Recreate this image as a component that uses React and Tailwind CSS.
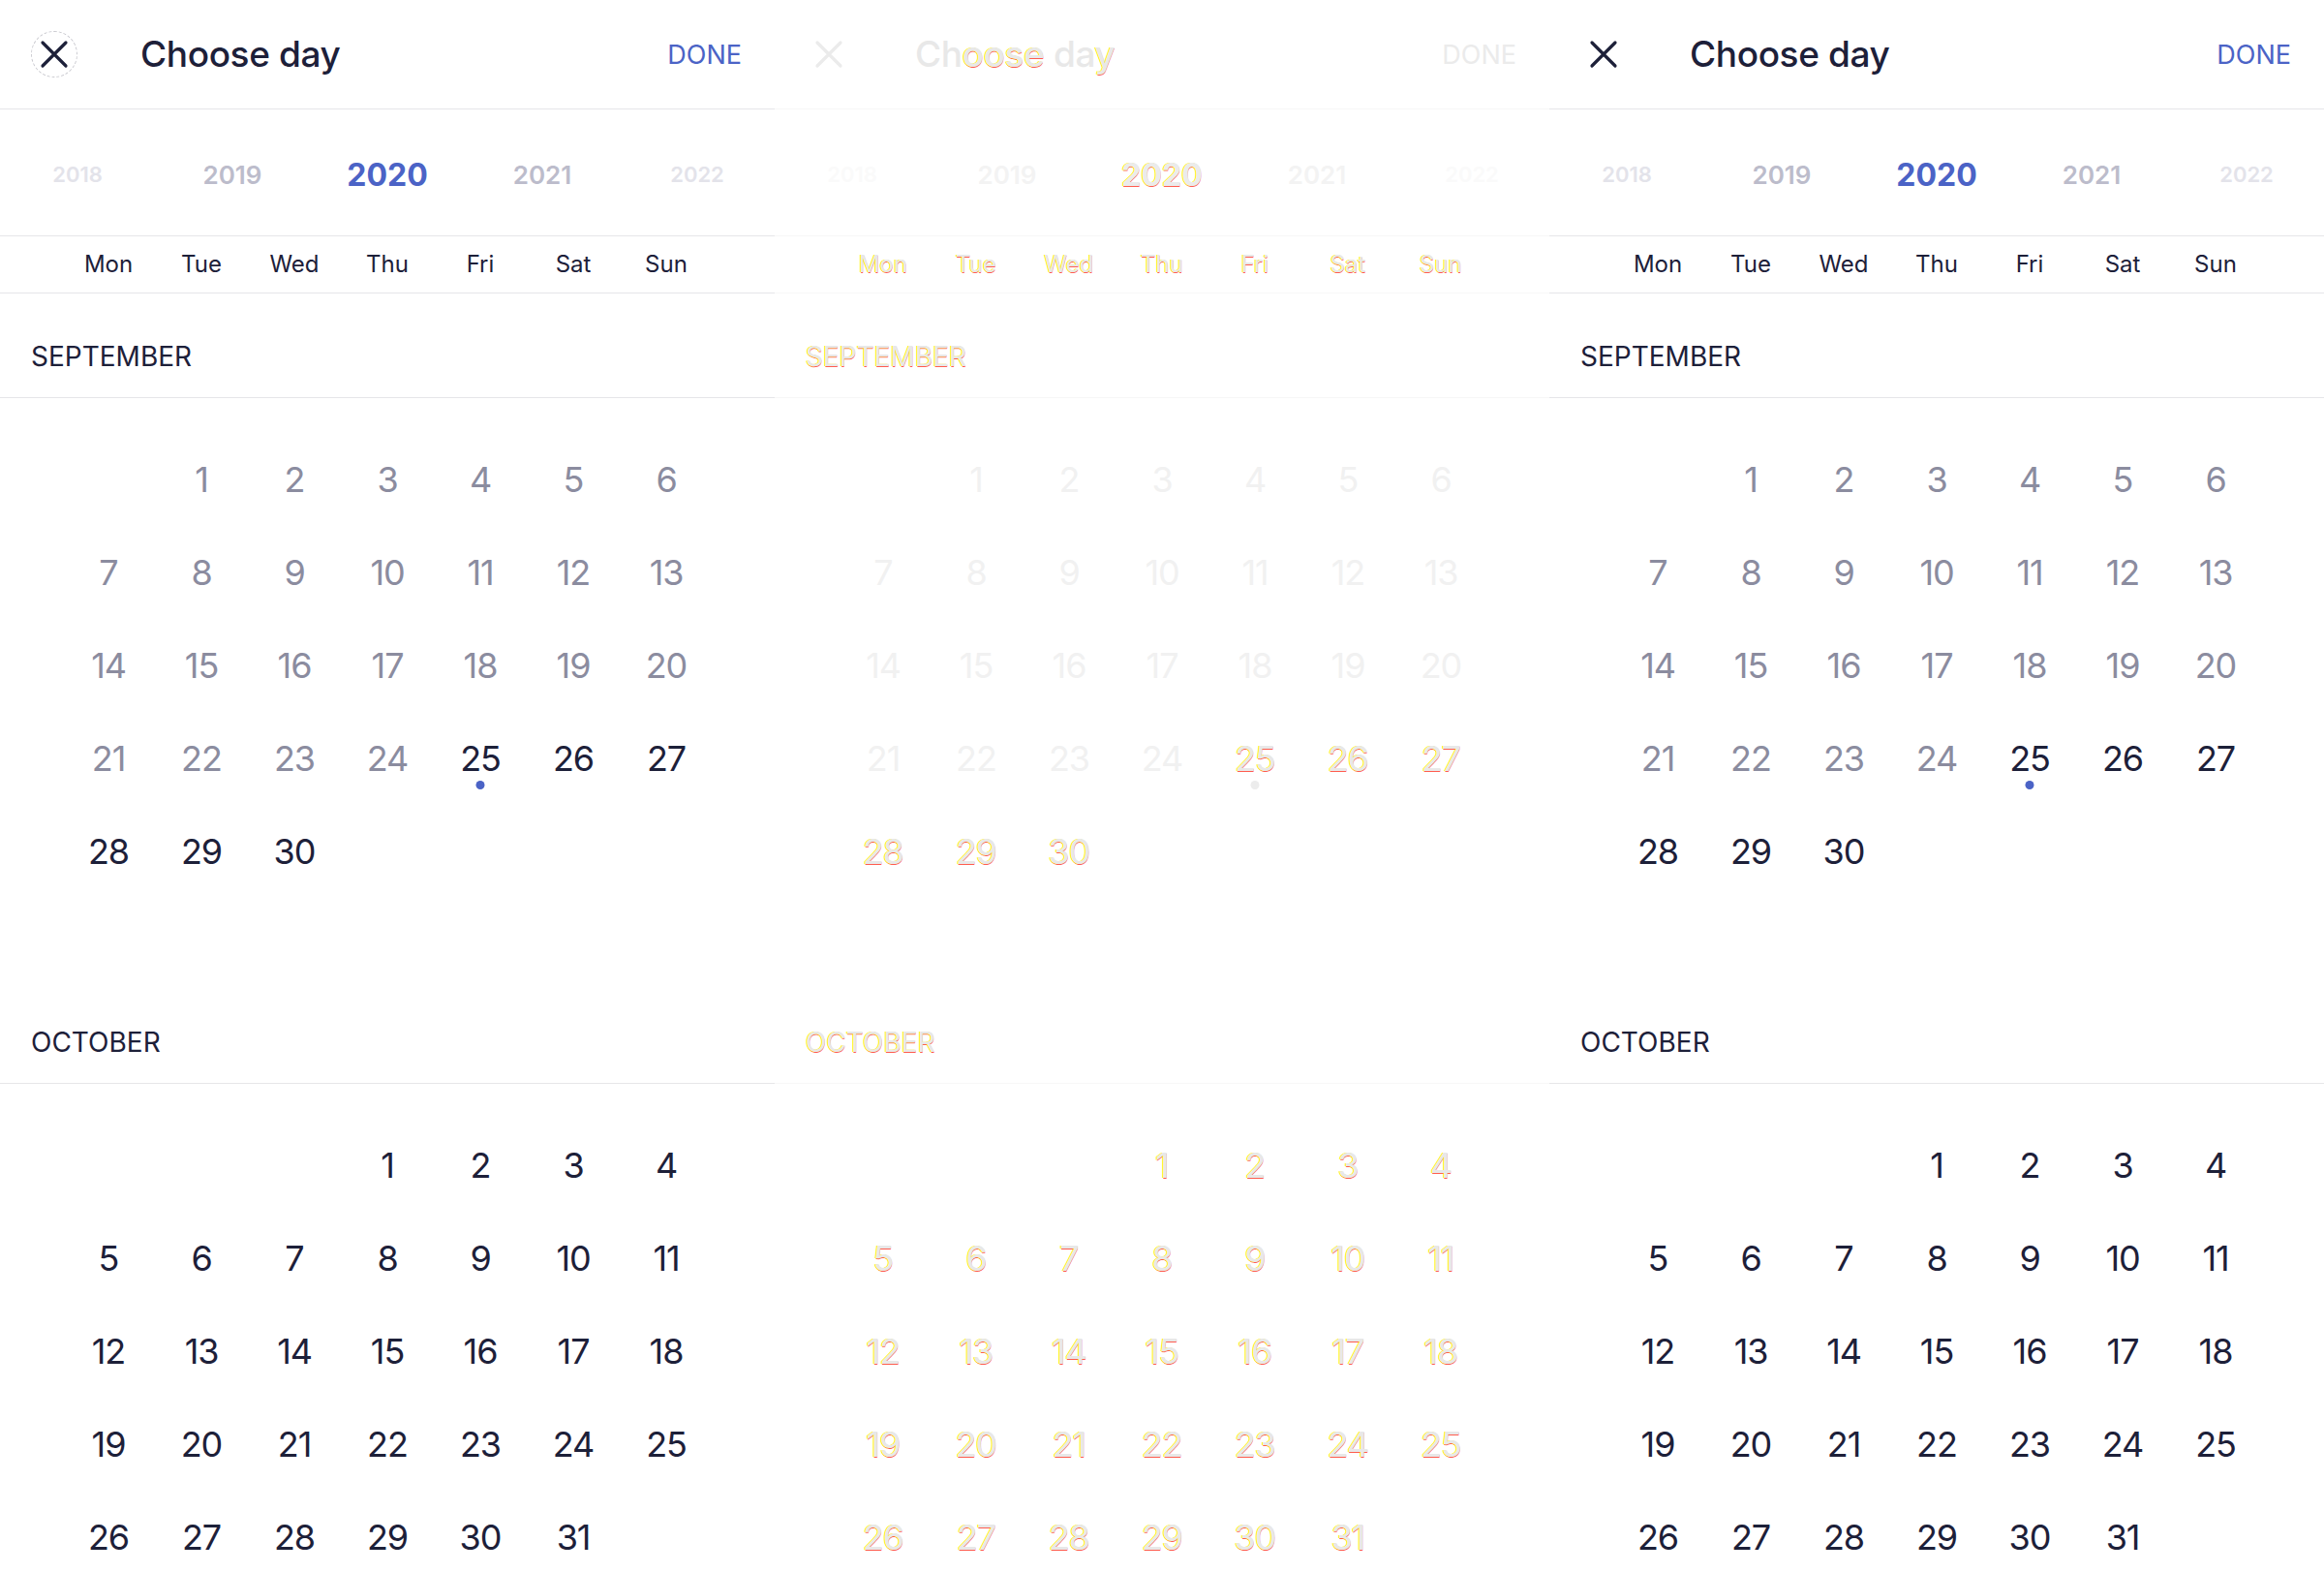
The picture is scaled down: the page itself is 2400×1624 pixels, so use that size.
import React from 'react'

const YEARS = [
  { y: '2018', k: 'far' },
  { y: '2019', k: 'mid' },
  { y: '2020', k: 'cur' },
  { y: '2021', k: 'mid' },
  { y: '2022', k: 'far' },
]
const WEEK = ['Mon', 'Tue', 'Wed', 'Thu', 'Fri', 'Sat', 'Sun']

const themes = {
  normal: {
    dark: 'text-[#1d2039]',
    gray: 'text-[#8b8c9f]',
    blue: 'text-[#4b63c6]',
    mid: 'text-[#bcbccb]',
    far: 'text-[#e3e3ea]',
    line: 'border-[#e6e6e9]',
    dot: 'bg-[#4b63c6]',
    hl: '',
  },
  diff: {
    dark: 'text-[#e8e8e8]',
    gray: 'text-[#f1f1f1]',
    blue: 'text-[#ebebeb]',
    mid: 'text-[#f3f3f3]',
    far: 'text-[#fafafa]',
    line: 'border-[#f7f7f7]',
    dot: 'bg-[#ececec]',
    hl: '[text-shadow:-1px_0_0_#fff200,0_1px_0_rgba(255,20,0,0.7)]',
  },
}

function monthCells(offset, days) {
  const cells = []
  for (let i = 0; i < offset; i++) cells.push(null)
  for (let d = 1; d <= days; d++) cells.push(d)
  return cells
}

function CloseIcon({ ring, color }) {
  return (
    <div className={`w-[48px] h-[48px] rounded-full flex items-center justify-center ${ring ? 'border border-dashed border-[#c9c9cf]' : 'border border-transparent'}`}>
      <svg width="30" height="30" viewBox="0 0 30 30" fill="none">
        <path d="M3 3 L27 27 M27 3 L3 27" stroke={color} strokeWidth="3.2" strokeLinecap="round" />
      </svg>
    </div>
  )
}

function Month({ name, offset, days, t, diff, isSept }) {
  const cells = monthCells(offset, days)
  return (
    <div>
      <div className={`pl-8 pt-[50px] pb-[27px] border-b ${t.line}`}>
        <div className={`text-[28px] leading-[30px] ${t.dark} ${diff ? t.hl : ''}`}>{name}</div>
      </div>
      <div className="px-16 pt-[36px] pb-[84px] grid grid-cols-7">
        {cells.map((d, i) => {
          const past = isSept && d !== null && d < 25
          const changed = diff && !past
          return (
            <div key={i} className="h-[96px] flex flex-col items-center justify-center relative">
              {d !== null && (
                <span className={`text-[36px] leading-[40px] tracking-[-0.03em] ${past ? t.gray : t.dark} ${changed ? t.hl : ''}`}>{d}</span>
              )}
              {isSept && d === 25 && (
                <span className={`absolute left-1/2 -translate-x-1/2 top-[71px] w-[9px] h-[9px] rounded-full ${t.dot}`} />
              )}
            </div>
          )
        })}
      </div>
    </div>
  )
}

function Panel({ variant, ring }) {
  const diff = variant === 'diff'
  const t = diff ? themes.diff : themes.normal
  const iconColor = diff ? '#ebebeb' : '#1d2039'
  return (
    <div className="w-[800px] h-[1624px] overflow-hidden bg-white shrink-0" style={{ fontFamily: 'Inter, "Noto Sans", sans-serif' }}>
      <div className={`h-[113px] border-b ${t.line} flex items-center pl-[32px] pr-[34px]`}>
        <CloseIcon ring={ring} color={iconColor} />
        <div className={`ml-[65px] text-[37px] font-medium tracking-[-0.01em] ${t.dark}`}>
          {diff ? (
            <>Ch<span className={t.hl}>oose</span> da<span className={t.hl}>y</span></>
          ) : 'Choose day'}
        </div>
        <div className={`ml-auto mt-[3px] text-[27px] ${t.blue}`}>DONE</div>
      </div>

      <div className={`h-[131px] pt-[5px] border-b ${t.line} grid grid-cols-5 items-center`}>
        {YEARS.map(({ y, k }) => (
          <div key={y} className="flex justify-center">
            {k === 'cur' && <span className={`text-[32px] font-bold ${t.blue} ${diff ? t.hl : ''}`}>{y}</span>}
            {k === 'mid' && <span className={`text-[26px] font-semibold ${t.mid}`}>{y}</span>}
            {k === 'far' && <span className={`text-[22px] font-semibold ${t.far}`}>{y}</span>}
          </div>
        ))}
      </div>

      <div className={`h-[59px] border-b ${t.line} px-16 grid grid-cols-7 items-center`}>
        {WEEK.map((w) => (
          <div key={w} className={`text-center text-[24px] ${t.dark} ${diff ? t.hl : ''}`}>{w}</div>
        ))}
      </div>

      <Month name="SEPTEMBER" offset={1} days={30} t={t} diff={diff} isSept />
      <Month name="OCTOBER" offset={3} days={31} t={t} diff={diff} />
    </div>
  )
}

export default function App() {
  return (
    <div className="w-[2400px] h-[1624px] flex bg-white overflow-hidden">
      <Panel variant="expected" ring />
      <Panel variant="diff" />
      <Panel variant="actual" />
    </div>
  )
}
